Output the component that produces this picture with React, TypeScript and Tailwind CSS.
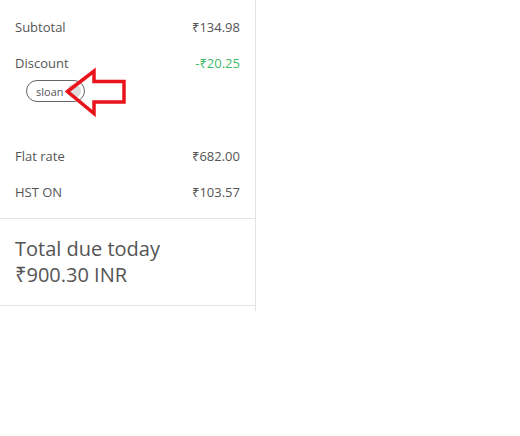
import React from "react";

export default function App() {
  return (
    <div className="w-[520px] h-[436px] bg-white" style={{ fontFamily: '"Open Sans", "Noto Sans", sans-serif' }}>
      <div className="relative w-[256px] border-r border-[#e3e3e3] pb-[5px] text-[#555]">
        <div className="px-[15px] pt-[18px] pb-[17px] border-b border-[#e3e3e3] text-[13px] leading-[18px]">
          <div className="flex justify-between">
            <span>Subtotal</span>
            <span>₹134.98</span>
          </div>
          <div className="flex justify-between mt-[18px]">
            <span>Discount</span>
            <span className="text-[#3dbb6a]">-₹20.25</span>
          </div>
          <div className="mt-[8px] ml-[11px] flex items-center w-[59px] h-[22px] rounded-full border border-[#666] pl-[9px] gap-[3px]">
            <span className="text-[11px] leading-none text-[#555]">sloan</span>
            <span className="w-[14px] h-[14px] rounded-full bg-[#dcdcdc]" />
          </div>
          <div className="flex justify-between mt-[45px]">
            <span>Flat rate</span>
            <span>₹682.00</span>
          </div>
          <div className="flex justify-between mt-[18px]">
            <span>HST ON</span>
            <span>₹103.57</span>
          </div>
        </div>
        <div className="px-[15px] pt-[17px] pb-[17px] border-b border-[#e3e3e3] text-[20px] leading-[26px]">
          <div>Total due today</div>
          <div>₹900.30 INR</div>
        </div>
        <svg className="absolute left-0 top-0" width="140" height="130" viewBox="0 0 140 130" fill="none">
          <path
            d="M67.5 91.5 L94 71 L94 81.5 L124 81.5 L124 102 L94 102 L94 113.5 Z"
            stroke="#e8131b"
            strokeWidth="3.5"
            strokeLinejoin="miter"
          />
        </svg>
      </div>
    </div>
  );
}
